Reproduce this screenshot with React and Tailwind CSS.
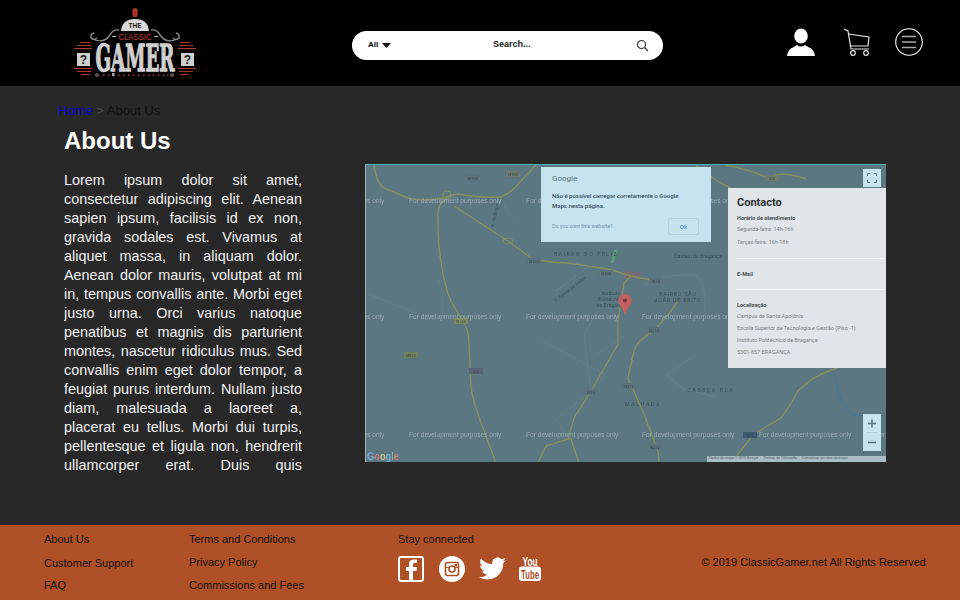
import React from 'react';
import { FaTwitter } from 'react-icons/fa';

const LOREM =
  'Lorem ipsum dolor sit amet, consectetur adipiscing elit. Aenean sapien ipsum, facilisis id ex non, gravida sodales est. Vivamus at aliquet massa, in aliquam dolor. Aenean dolor mauris, volutpat at mi in, tempus convallis ante. Morbi eget justo urna. Orci varius natoque penatibus et magnis dis parturient montes, nascetur ridiculus mus. Sed convallis enim eget dolor tempor, a feugiat purus interdum. Nullam justo diam, malesuada a laoreet a, placerat eu tellus. Morbi dui turpis, pellentesque et ligula non, hendrerit ullamcorper erat. Duis quis condimentum nibh, sit amet tempor lorem.';

const ROADS = [
  'M8 0 L10 10 Q12 20 20 24 L45 34 Q60 36 78 33 Q86 30 92 29 Q115 33 135 32 Q145 28 152 19 L170 0',
  'M81 34 Q70 38 72 55 Q72 80 75 96 Q78 120 85 136 L95 153 Q103 163 103 178 L105 223 Q108 240 117 263 L130 298',
  'M88 41 L142 76 L165 93 Q175 97 202 98 L242 104 L265 111 L290 116',
  'M252 156 L252 179 L225 226 L208 253 L202 274 L180 281 L172 298 M202 274 L205 274 L213 298',
  'M305 146 L288 166 Q270 175 267 190 L262 213 L278 249 L292 286 L293 298',
  'M365 298 L388 269 L415 253 Q425 240 432 226 Q445 212 468 204 L521 183',
  'M402 13 Q385 5 360 0 M402 13 Q415 5 440 14 M330 0 Q345 15 380 30',
  'M305 146 L312 136 M252 156 L258 118 L265 111',
];

const THIN_ROADS = [
  'M0 128 L45 146 Q60 160 76 152 Q80 130 72 115',
  'M150 60 L132 28 M190 126 L222 102 M240 130 L218 170 L225 226',
  'M260 170 L230 190 M330 190 L300 210 L318 224 L350 232',
  'M175 175 L240 210 L225 226 L190 255 L205 274',
  'M278 120 Q300 108 330 110 Q345 125 335 160',
];

const WATERMARK_ROWS = [37.5, 154, 271.5];
const WATERMARK_COLS = [-74, 43, 160, 276, 393, 509];

const ROAD_TAGS = [
  [147, 9, 'N103', '#6f7b6a'],
  [107, 13, 'N103', '#5a737c'],
  [168, 96, 'N103', '#5a737c'],
  [240, 108, 'N103', '#5a737c'],
  [95, 156, 'N103', '#7c8a5e'],
  [45, 190, 'M515', '#6f8058'],
  [110, 206, 'IC5', '#5a6475'],
  [225, 227, 'N15', '#5a737c'],
  [288, 165, 'N217', '#5a737c'],
  [263, 221, 'N217', '#5a737c'],
  [289, 282, 'N217', '#5a737c'],
  [384, 270, 'IC5', '#3d5a70'],
  [406, 13, 'IC5', '#6f7b6a'],
  [290, 116, 'N15', '#5a737c'],
];

const PLACE_LABELS = [
  [220, 91, 'BAIRRO DO FELIZ', 'tracking-[1.6px]'],
  [312, 131, 'BAIRRO SÃO', 'tracking-[0.8px]'],
  [312, 137, 'JOÃO DE BRITO', 'tracking-[0.8px]'],
  [345, 227, 'CABEÇA BOA', 'tracking-[1.6px]'],
  [277, 241, 'MALHADA', 'tracking-[1.6px]'],
  [332, 93, 'Castelo de Bragança', ''],
  [245, 130, 'Instituto', ''],
  [245, 136, 'Politécnico', ''],
  [245, 142, 'de Bragança', ''],
];

const LOGO_BARS = [
  [10, 37, 10],
  [7, 40, 14],
  [4, 43, 18],
  [4, 63, 18],
  [7, 66, 14],
  [11, 69, 9],
];

const GOOGLE_LETTERS = [
  ['G', '#7fa8d0'],
  ['o', '#c98080'],
  ['o', '#cfc080'],
  ['g', '#7fa8d0'],
  ['l', '#84b092'],
  ['e', '#c98080'],
];

function Logo() {
  return (
    <svg width="130" height="76" viewBox="0 0 130 76" className="shrink-0">
      {/* gem */}
      <rect x="62.5" y="3" width="5" height="9" rx="2.5" fill="#b93a2c" />
      <path d="M65 4 V11" stroke="#6e2018" strokeWidth="0.6" />
      {/* THE arch */}
      <path d="M51 26 Q52 14 65 14 Q78 14 79 26 Z" fill="#d8d8d8" />
      <text x="65" y="23" textAnchor="middle" fontSize="6.5" fontWeight="700" fill="#222" className="font-['Liberation_Sans']">
        THE
      </text>
      {/* scrolls */}
      <path d="M27 33 Q24 36 21 33 Q20 29 24 28 M21 33 Q33 40 40 30 Q43 24 49 25" fill="none" stroke="#8c8c8c" strokeWidth="1.4" />
      <path d="M103 33 Q106 36 109 33 Q110 29 106 28 M109 33 Q97 40 90 30 Q87 24 81 25" fill="none" stroke="#8c8c8c" strokeWidth="1.4" />
      <text x="65" y="35" textAnchor="middle" fontSize="9" fill="#c7402f" textLength="33" lengthAdjust="spacingAndGlyphs" className="font-['Liberation_Sans']">
        CLASSIC
      </text>
      <rect x="42" y="31" width="4" height="1" fill="#bbb" />
      <rect x="84" y="31" width="4" height="1" fill="#bbb" />
      <text x="65" y="65.5" textAnchor="middle" fontSize="38" fontWeight="700" fill="#cfcfcf" stroke="#cfcfcf" strokeWidth="1.3" textLength="79" lengthAdjust="spacingAndGlyphs" className="font-['DejaVu_Serif',serif]">
        GAMER
      </text>
      {/* side bars */}
      {LOGO_BARS.map(([x, y, w]) => (
        <React.Fragment key={`${x}-${y}`}>
          <rect x={x} y={y} width={w} height="1" fill="#a83a2c" />
          <rect x={130 - x - w} y={y} width={w} height="1" fill="#a83a2c" />
        </React.Fragment>
      ))}
      {/* question blocks */}
      <rect x="7" y="48" width="13" height="13" fill="#d0d0d0" />
      <rect x="111" y="48" width="13" height="13" fill="#d0d0d0" />
      <text x="13.5" y="59" textAnchor="middle" fontSize="12" fontWeight="700" fill="#111" className="font-['Liberation_Sans']">?</text>
      <text x="117.5" y="59" textAnchor="middle" fontSize="12" fontWeight="700" fill="#111" className="font-['Liberation_Sans']">?</text>
      {/* dotted line */}
      <circle cx="27" cy="70" r="2" fill="#555" />
      <circle cx="102" cy="70" r="2" fill="#555" />
      {[33, 38, 48, 53, 58, 63, 68, 73, 78, 83, 88, 93, 97].map((x) => (
        <rect key={x} x={x} y="69.5" width="1.5" height="1.5" fill="#a83a2c" />
      ))}
      <rect x="42" y="68" width="2.5" height="3" fill="#aaa" />
    </svg>
  );
}

function SearchBar() {
  return (
    <div className="flex items-center w-[311px] font-['Liberation_Sans',sans-serif] text-black">
      <div className="flex items-center w-[97px] h-[29px] bg-white rounded-l-[15px] pl-4 text-[8px] font-bold">
        <span>All</span>
        <svg width="9" height="5" viewBox="0 0 9 5" className="ml-[4px]">
          <path d="M0 0 H9 L4.5 5 Z" fill="#111" />
        </svg>
      </div>
      <div className="flex items-center flex-1 h-[29px] bg-white rounded-r-[15px] pl-[44px] pr-[14px]">
        <span className="flex-1 text-[9px] font-bold text-[#222]">Search...</span>
        <svg width="13" height="13" viewBox="0 0 13 13" fill="none" stroke="#333" strokeWidth="1.2">
          <circle cx="5.5" cy="5.5" r="4" />
          <path d="M8.5 8.5 L12 12" />
        </svg>
      </div>
    </div>
  );
}

function HeaderIcons() {
  return (
    <div className="flex items-center ml-[124px] mb-[2px]">
      <svg width="28" height="28" viewBox="0 0 28 28" fill="#fff">
        <ellipse cx="14" cy="8" rx="6.8" ry="7.6" />
        <path d="M0 28 Q1 21 6 19.5 L10 17 Q14 20 18 17 L22 19.5 Q27 21 28 28 Z" />
      </svg>
      <svg width="28" height="28" viewBox="0 0 28 28" fill="none" stroke="#e4e4e4" strokeWidth="1.2" className="ml-[28px]">
        <path d="M1 1 L5 3 L8 21 L26 21" />
        <path d="M5.5 6 L26 9 L25 18 L7.5 18" />
        <circle cx="10" cy="25" r="2.3" />
        <circle cx="23" cy="25" r="2.3" />
      </svg>
      <svg width="28" height="28" viewBox="0 0 28 28" fill="none" stroke="#fff" className="ml-[24px]">
        <circle cx="14" cy="14" r="13.3" strokeWidth="1.1" />
        <path d="M7 8.5 H21 M7 14 H21 M7 19.5 H21" strokeWidth="1.3" stroke="#a8a8a8" />
      </svg>
    </div>
  );
}

function MapEmbed() {
  return (
    <div className="relative w-[521px] h-[298px] ml-[63px] mt-[44px] bg-[#5b7782] border-t border-t-[#4fb3b5] border-l border-l-[#9fb4bb] overflow-hidden shrink-0 font-['Roboto','Liberation_Sans',sans-serif]">
      <svg width="521" height="298" viewBox="0 0 521 298" className="absolute left-0 top-0 blur-[0.4px]">
        {THIN_ROADS.map((d) => (
          <path key={d} d={d} fill="none" stroke="#648088" strokeWidth="0.8" />
        ))}
        <path d="M468 209 L472 225 L475 236 L485 249 L497 251" fill="none" stroke="#3f7a9c" strokeWidth="1" />
        <path d="M250 85 L246 98" stroke="#5c9a7c" strokeWidth="3" />
        <path d="M258 106 L276 108 L272 114 L258 113 Z" fill="#7a6a78" />
        {ROADS.map((d) => (
          <path key={d} d={d} fill="none" stroke="#84915f" strokeWidth="1.4" />
        ))}
        <circle cx="81" cy="30" r="4" fill="none" stroke="#84915f" strokeWidth="1.2" />
        <ellipse cx="142" cy="76" rx="5" ry="3" fill="none" stroke="#84915f" strokeWidth="1" />
        {ROAD_TAGS.map(([x, y, label, fill]) => (
          <g key={`${x}-${y}`}>
            <rect x={x - 7} y={y - 3} width="14" height="6" fill={fill} />
            <text x={x} y={y + 1.6} textAnchor="middle" fontSize="4" fill="#37494f">
              {label}
            </text>
          </g>
        ))}
        {PLACE_LABELS.map(([x, y, label, extra]) => (
          <text key={label} x={x} y={y} textAnchor="middle" fontSize="5.2" fill="#3a525b" className={extra}>
            {label}
          </text>
        ))}
        <text x="190" y="137" fontSize="4.6" fill="#3a525b" transform="rotate(-38 190 137)">R. Conde de Ariães</text>
        <text x="128" y="62" fontSize="4.6" fill="#3a525b" transform="rotate(-78 128 62)">R. do Bispo</text>
        {WATERMARK_ROWS.map((y) =>
          WATERMARK_COLS.map((x) => (
            <text key={`${x}-${y}`} x={x} y={y} fontSize="6.6" fill="#96aab1" className="font-['Liberation_Sans']">
              For development purposes only
            </text>
          )),
        )}
        {/* marker */}
        <path d="M259 129 C255 129 252.5 132 252.5 135.5 C252.5 140 257 143 259 150 C261 143 265.5 140 265.5 135.5 C265.5 132 263 129 259 129 Z" fill="#c25f5f" />
        <circle cx="259" cy="135.5" r="2" fill="#6d3b40" />
        <text x="1" y="295" fontSize="11" fontWeight="700" textLength="32" lengthAdjust="spacingAndGlyphs" className="font-['Liberation_Sans']">
          {GOOGLE_LETTERS.map(([letter, fill], i) => (
            <tspan key={i} fill={fill}>{letter}</tspan>
          ))}
        </text>
      </svg>

      {/* billing warning dialog */}
      <div className="absolute left-[175px] top-[2px] w-[170px] h-[75px] bg-[#c5e4f0] px-[11px] pt-[7px] text-[#35505b]">
        <p className="text-[8px] leading-[10px] text-[#5a727c]">Google</p>
        <p className="mt-[7px] text-[6px] leading-[9.5px] font-medium">
          Não é possível carregar corretamente o Google
          <br />
          Maps nesta página.
        </p>
        <p className="mt-[12px] text-[5.4px] text-[#7090a8]">Do you own this website?</p>
        <span className="absolute right-[12px] bottom-[7px] flex items-center justify-center w-[31px] h-[17px] border border-[#b4d6e2] rounded-[2px] text-[6px] font-medium text-[#4f8fd0]">
          Ok
        </span>
      </div>

      {/* contact card */}
      <div className="absolute left-[362px] top-[23px] w-[159px] h-[180px] bg-[#dfe5e8] pl-[9px] pr-[2px] pt-[9px] text-[#7b8286]">
        <p className="text-[11px] leading-[12px] font-bold text-[#2b3033]">Contacto</p>
        <p className="mt-[4px] text-[5.5px] leading-[11px] font-bold text-[#4a5053]">Horário de atendimento</p>
        <p className="text-[5.5px] leading-[11px]">Segunda-feira: 14h-16h</p>
        <p className="mt-px text-[5.5px] leading-[12px]">Terças-feira: 16h-18h</p>
        <div className="h-px bg-[#f1f4f5] mt-[10px] -ml-[1px]" />
        <p className="mt-[10px] text-[5.5px] leading-[11px] font-bold text-[#4a5053]">E-Mail</p>
        <div className="h-px bg-[#f1f4f5] mt-[9px] -ml-[1px]" />
        <p className="mt-[10px] text-[5.5px] leading-[10px] font-bold text-[#4a5053]">Localização</p>
        <p className="text-[5.5px] leading-[12px]">Campus de Santa Apolónia</p>
        <p className="text-[5.5px] leading-[12px] whitespace-nowrap">Escola Superior de Tecnologia e Gestão (Piso -1)</p>
        <p className="text-[5.5px] leading-[12px]">Instituto Politécnico de Bragança</p>
        <p className="text-[5.5px] leading-[12px]">5301-857 BRAGANÇA</p>
      </div>

      {/* map controls */}
      <div className="absolute left-[497px] top-[4px] flex items-center justify-center w-[18px] h-[18px] bg-[#c5e4f0]">
        <svg width="10" height="10" viewBox="0 0 10 10" fill="none" stroke="#5e7680" strokeWidth="1">
          <path d="M0.5 3 V0.5 H3 M7 0.5 H9.5 V3 M9.5 7 V9.5 H7 M3 9.5 H0.5 V7" />
        </svg>
      </div>
      <div className="absolute left-[497px] top-[249px] flex flex-col w-[18px] h-[37px] bg-[#c5e4f0]">
        <svg width="18" height="18" viewBox="0 0 18 18" stroke="#5e7680" strokeWidth="1.6">
          <path d="M5 9.5 H13 M9 5.5 V13.5" />
        </svg>
        <div className="h-px bg-[#b4d2dd] mx-[3px]" />
        <svg width="18" height="18" viewBox="0 0 18 18" stroke="#5e7680" strokeWidth="1.6">
          <path d="M5 9.5 H13" />
        </svg>
      </div>
      <div className="absolute right-0 bottom-0 flex items-center h-[6px] w-[179px] bg-[#a9bdc6] pl-[2px] text-[3.6px] text-[#4b5f68] whitespace-nowrap">
        <span>Dados do mapa ©2019 Google</span>
        <span className="ml-[5px]">Termos de Utilização</span>
        <span className="ml-[5px]">Comunicar um erro no mapa</span>
      </div>
    </div>
  );
}

function FooterLink({ children, className = '' }) {
  return <p className={`text-[11px] leading-[13px] text-[#111] ${className}`}>{children}</p>;
}

function SocialIcons() {
  return (
    <div className="flex items-center mt-[9px]">
      <svg width="26" height="26" viewBox="0 0 26 26" fill="none">
        <rect x="1" y="1" width="24" height="24" rx="2" stroke="#fff" strokeWidth="2" />
        <path d="M15 25 V15 H18.5 L19 11 H15 V8.5 Q15 6.8 17 6.8 H19 V3.5 H16 Q11 3.5 11 8 V11 H8 V15 H11 V25 Z" fill="#fff" />
      </svg>
      <svg width="26" height="26" viewBox="0 0 26 26" fill="none" className="ml-[15px]">
        <circle cx="13" cy="13" r="13" fill="#fff" />
        <rect x="6.5" y="6.5" width="13" height="13" rx="2" stroke="#b05027" strokeWidth="1.6" />
        <circle cx="13" cy="13" r="3" stroke="#b05027" strokeWidth="1.6" />
        <path d="M6.5 11.5 H10 M16 11.5 H19.5" stroke="#b05027" strokeWidth="1" />
        <rect x="15.5" y="8" width="2.5" height="2.5" fill="#b05027" />
      </svg>
      <FaTwitter size={27} color="#fff" className="ml-[14px]" />
      <svg width="23" height="27" viewBox="0 0 23 27" className="ml-[13px]">
        <text x="11" y="10.5" textAnchor="middle" fontSize="13" fontWeight="700" fill="#fff" textLength="15" lengthAdjust="spacingAndGlyphs">
          You
        </text>
        <rect x="0" y="11.5" width="22" height="14.5" rx="3" fill="#fff" />
        <text x="11" y="23.5" textAnchor="middle" fontSize="12.5" fontWeight="700" fill="#b05027" textLength="18" lengthAdjust="spacingAndGlyphs">
          Tube
        </text>
      </svg>
    </div>
  );
}

export default function App() {
  return (
    <div className="flex flex-col w-[960px] h-[600px] overflow-hidden bg-[#282828] font-['Liberation_Sans',Arial,sans-serif]">
      <header className="flex items-center h-[86px] bg-black pl-[70px] shrink-0">
        <Logo />
        <div className="ml-[152px] mt-1">
          <SearchBar />
        </div>
        <HeaderIcons />
      </header>

      <main className="flex-1 min-h-0 border-t border-t-[#303030]">
        <nav className="pl-[58px] pt-[15px] text-[13px] leading-[18px]">
          <a href="#home" className="text-[#0a0ac8]">Home</a>
          <span className="text-[#4a4a4a]"> &gt; </span>
          <span className="text-[#111]">About Us</span>
        </nav>
        <div className="flex pl-[64px]">
          <section className="w-[238px] shrink-0">
            <h1 className="mt-[6px] text-[24px] leading-[30px] font-bold text-white">About Us</h1>
            <p className="mt-[15px] h-[304px] overflow-hidden text-justify text-[14.4px] leading-[19px] text-[#f2f2f2]">
              {LOREM}
            </p>
          </section>
          <MapEmbed />
        </div>
      </main>

      <footer className="flex h-[75px] bg-[#b05027] shrink-0">
        <div className="w-[145px] ml-[44px] pt-[8px]">
          <FooterLink>About Us</FooterLink>
          <FooterLink className="mt-[11px]">Customer Support</FooterLink>
          <FooterLink className="mt-[9px]">FAQ</FooterLink>
        </div>
        <div className="w-[209px] pt-[8px]">
          <FooterLink>Terms and Conditions</FooterLink>
          <FooterLink className="mt-[10px]">Privacy Policy</FooterLink>
          <FooterLink className="mt-[10px]">Commissions and Fees</FooterLink>
        </div>
        <div className="pt-[8px]">
          <FooterLink>Stay connected</FooterLink>
          <SocialIcons />
        </div>
        <div className="flex-1 flex justify-end pr-[34px] pt-[31px]">
          <FooterLink>© 2019 ClassicGamer.net All Rights Reserved</FooterLink>
        </div>
      </footer>
    </div>
  );
}
